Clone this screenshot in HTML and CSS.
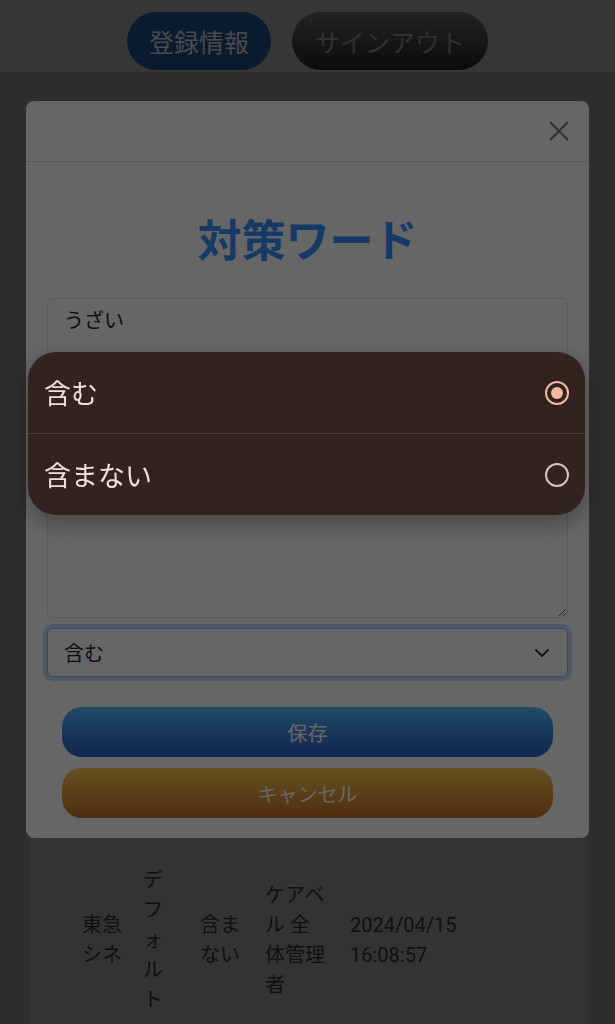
FILE: index.html
```html
<!DOCTYPE html>
<html lang="ja">
<head>
  <meta charset="UTF-8" />
  <meta name="viewport" content="width=device-width, initial-scale=1.0"/>
  <title>対策ワード</title>
  <link rel="stylesheet" href="styles.css">
</head>
<body>

  <header class="topbar">
    <button class="pill pill-info">登録情報</button>
    <button class="pill pill-signout">サインアウト</button>
  </header>

  <main class="panel">
    <div class="word-row">
      <div class="cell c-name">東急シネ</div>
      <div class="cell c-type">デフォルト</div>
      <div class="cell c-mode">含まない</div>
      <div class="cell c-user">ケアベル 全体管理者</div>
      <div class="cell c-date">2024/04/15<br>16:08:57</div>
    </div>
  </main>

  <div class="backdrop"></div>

  <!-- Edit dialog -->
  <div class="modal">
    <div class="modal-header">
      <button class="close-btn" aria-label="閉じる">
        <svg width="20" height="20" viewBox="0 0 20 20">
          <path d="M1 1L19 19M19 1L1 19" stroke="#000" stroke-width="2" fill="none"/>
        </svg>
      </button>
    </div>
    <div class="modal-body">
      <h2 class="modal-title">対策ワード</h2>
      <textarea class="word-input">うざい</textarea>
      <div class="select-wrap">
        <select class="mode-select">
          <option selected>含む</option>
          <option>含まない</option>
        </select>
        <svg class="chevron" width="14" height="8" viewBox="0 0 14 8">
          <path d="M1 1L7 7L13 1" stroke="#343a40" stroke-width="2" fill="none" stroke-linecap="round" stroke-linejoin="round"/>
        </svg>
      </div>
      <button class="btn btn-save">保存</button>
      <button class="btn btn-cancel">キャンセル</button>
    </div>
  </div>

  <!-- Native picker open over the dialog -->
  <div class="scrim"></div>
  <ul class="picker">
    <li class="picker-item selected">含む<span class="radio"></span></li>
    <li class="picker-item">含まない<span class="radio"></span></li>
  </ul>

</body>
</html>
```

FILE: styles.css
```css
body {
  margin: 0;
  font-family: Roboto, "Noto Sans CJK JP", sans-serif;
  background: #e6e6e6;
  color: #555;
}

.topbar {
  position: relative;
  z-index: 20;
  height: 72px;
  box-sizing: border-box;
  padding-top: 12px;
  background: #888;
  display: flex;
  justify-content: center;
  align-items: flex-start;
  gap: 21px;
}
.pill {
  height: 58px;
  padding: 0 22px;
  border: none;
  border-radius: 29px;
  font-family: "Noto Sans CJK JP", sans-serif;
  font-size: 25px;
  cursor: pointer;
}
.pill-info {
  background: #1b4176;
  color: #b8b8b8;
}
.pill-signout {
  padding: 0 23px;
  background: linear-gradient(#585858, #1c1c1c);
  color: #7a7a7a;
}

.panel {
  margin: 40px 30px 0;
  min-height: calc(100vh - 112px);
  background: #fff;
  display: flex;
  flex-direction: column;
  justify-content: flex-end;
  padding-bottom: 9px;
  box-sizing: border-box;
}
.word-row {
  display: grid;
  grid-template-columns: 40px 36px 44px 64px 1fr;
  column-gap: 21px;
  align-items: center;
  padding-left: 52px;
  font-size: 20px;
  line-height: 30px;
}
.cell {
  word-break: break-all;
}
.c-user {
  word-break: normal;
  line-break: anywhere;
}

.backdrop {
  position: fixed;
  inset: 0;
  z-index: 10;
  background: rgba(0, 0, 0, 0.5);
}

/* Dialog */
.modal {
  position: fixed;
  top: 101px;
  left: 26px;
  right: 26px;
  z-index: 30;
  background: #fff;
  border-radius: 8px;
}
.modal-header {
  height: 60px;
  border-bottom: 1px solid #dee2e6;
  display: flex;
  justify-content: flex-end;
  align-items: center;
  padding: 0 20px;
}
.close-btn {
  width: 20px;
  height: 20px;
  padding: 0;
  border: none;
  background: none;
  opacity: 0.5;
  cursor: pointer;
}
.close-btn svg {
  display: block;
}
.modal-body {
  display: flex;
  flex-direction: column;
  padding: 0 21px 20px 21px;
}
.modal-title {
  margin: 50px 0 33px;
  text-align: center;
  font-family: "Noto Sans CJK JP", sans-serif;
  font-size: 44px;
  line-height: 53px;
  font-weight: 700;
  color: #3791ff;
}
.word-input {
  height: 320px;
  box-sizing: border-box;
  padding: 6px 16px;
  border: 1px solid #dee2e6;
  border-radius: 6px;
  font-family: "Noto Sans CJK JP", sans-serif;
  font-size: 20px;
  line-height: 1.5;
  color: #212529;
  background: #fff;
}
.select-wrap {
  position: relative;
  margin-top: 10px;
}
.mode-select {
  width: 100%;
  height: 49px;
  box-sizing: border-box;
  padding: 0 16px;
  appearance: none;
  border: 1px solid #86b7fe;
  border-radius: 6px;
  box-shadow: 0 0 0 4px rgba(13, 110, 253, 0.25);
  background: #fff;
  font-family: "Noto Sans CJK JP", sans-serif;
  font-size: 20px;
  color: #212529;
}
.chevron {
  position: absolute;
  right: 19px;
  top: 21px;
}
.btn {
  height: 50px;
  margin: 0 15px;
  border: none;
  border-radius: 20px;
  font-family: "Noto Sans CJK JP", sans-serif;
  font-size: 20px;
  color: #fff;
  cursor: pointer;
}
.btn-save {
  margin-top: 30px;
  background: linear-gradient(#53b9ff, #285fc6);
}
.btn-cancel {
  margin-top: 11px;
  background: linear-gradient(#ffc850, #c67128);
}

/* Picker */
.scrim {
  position: fixed;
  inset: 0;
  z-index: 40;
  background: rgba(0, 0, 0, 0.6);
}
.picker {
  position: fixed;
  top: 352px;
  left: 28px;
  width: 557px;
  z-index: 50;
  margin: 0;
  padding: 0;
  list-style: none;
  background: #322321;
  border-radius: 28px;
  box-shadow: 0 8px 24px rgba(0, 0, 0, 0.35);
  overflow: hidden;
}
.picker-item {
  height: 81px;
  padding: 0 16px;
  display: flex;
  justify-content: space-between;
  align-items: center;
  font-family: "Noto Sans CJK JP", sans-serif;
  font-size: 27px;
  color: #ecdfdb;
}
.picker-item + .picker-item {
  border-top: 1px solid #4b3b38;
}
.radio {
  width: 24px;
  height: 24px;
  box-sizing: border-box;
  border: 2px solid #d8c2be;
  border-radius: 50%;
  display: flex;
  justify-content: center;
  align-items: center;
}
.selected .radio {
  border-color: #f5b8a0;
}
.selected .radio::after {
  content: "";
  width: 12px;
  height: 12px;
  border-radius: 50%;
  background: #f5b8a0;
}
```
